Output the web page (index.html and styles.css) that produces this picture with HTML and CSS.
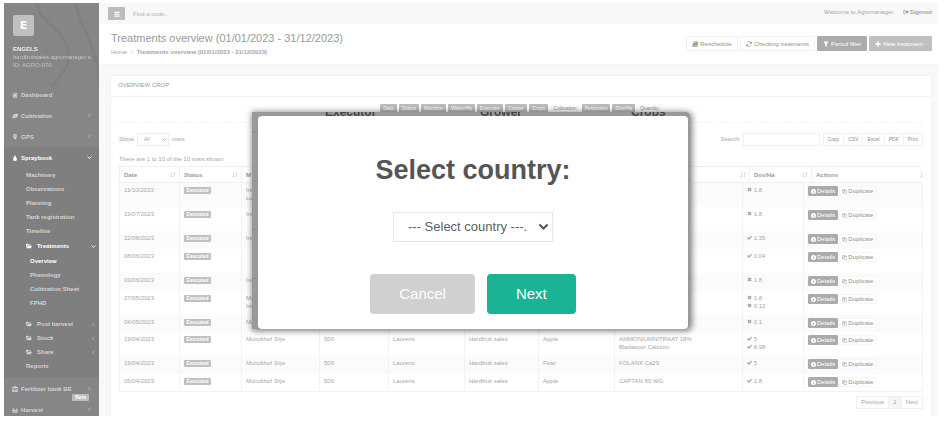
FILE: index.html
```html
<!DOCTYPE html>
<html lang="en">
<head>
    <meta charset="UTF-8">
    <meta name="viewport" content="width=device-width, initial-scale=1.0">
    <title>Treatments overview</title>
    <link rel="stylesheet" href="styles.css">
</head>
<body>

    <!-- Icons -->
    <svg class="sprite" aria-hidden="true">
        <symbol id="home" viewBox="0 0 16 16"><path d="M8 1 0 8l1 1 7-6 7 6 1-1-3-2.600V2h-2v1.600zM8 4.500 3 9v6h4v-4h2v4h4V9z"/></symbol>
        <symbol id="leaf" viewBox="0 0 16 16"><path d="M15 1c-2 2-5 1-8 2-4 1-6 4-5 8l-2 3 1 1 3-2c6 2 12-2 12-9 0-1 0-2-1-3zM4 11c2-3 4-4 8-5-3 2-5 3-7 6z"/></symbol>
        <symbol id="pin" viewBox="0 0 16 16"><path d="M8 0a5 5 0 0 0-5 5c0 3 3 6 5 11 2-5 5-8 5-11a5 5 0 0 0-5-5zm0 3a2 2 0 1 1 0 4 2 2 0 0 1 0-4z"/></symbol>
        <symbol id="drop" viewBox="0 0 16 16"><path d="M8 0C7 4 3 7 3 11a5 5 0 0 0 10 0c0-4-4-7-5-11z"/></symbol>
        <symbol id="folder" viewBox="0 0 16 16"><path d="M0 2h5l1 2h7v2H4l-4 6zM5 7h11l-3 7H1z"/></symbol>
        <symbol id="bank" viewBox="0 0 16 16"><path d="m8 0 8 4v1H0V4zM1 6h3v6h2V6h1v6h2V6h1v6h2V6h3v6h1v1H0v-1h1zM0 14h16v2H0z"/></symbol>
        <symbol id="basket" viewBox="0 0 16 16"><path d="m5 1-3 6H0v2h1l1 6h12l1-6h1V7h-2l-3-6-1 1 2 5H4l2-5zM4 10h1v4H4zm3 0h2v4H7zm4 0h1v4h-1z"/></symbol>
        <symbol id="left" viewBox="0 0 16 16"><path d="M10 3 5 8l5 5" fill="none" stroke="currentColor" stroke-width="2"/></symbol>
        <symbol id="down" viewBox="0 0 16 16"><path d="m2 5 6 6 6-6" fill="none" stroke="currentColor" stroke-width="3"/></symbol>
        <symbol id="sort" viewBox="0 0 16 16"><path d="M4 1v13M1 11l3 3 3-3M12 15V2M9 5l3-3 3 3" fill="none" stroke="currentColor" stroke-width="2"/></symbol>
        <symbol id="check" viewBox="0 0 16 16"><path d="m1 8 5 5 9-9" fill="none" stroke="currentColor" stroke-width="4"/></symbol>
        <symbol id="times" viewBox="0 0 16 16"><path d="m3 3 10 10M13 3 3 13" fill="none" stroke="currentColor" stroke-width="5"/></symbol>
        <symbol id="info" viewBox="0 0 16 16"><path fill-rule="evenodd" d="M8 0a8 8 0 1 1 0 16A8 8 0 0 1 8 0zM7 3v2h2V3zM6 6v2h1v3H6v2h4v-2H9V6z"/></symbol>
        <symbol id="copy" viewBox="0 0 16 16"><path d="M6 11H1V4l3-3h5v3M4 1v3H1M6 15V7l3-3h6v11zM9 4v3H6" fill="none" stroke="currentColor" stroke-width="1.400"/></symbol>
        <symbol id="book" viewBox="0 0 16 16"><path d="M5 1h11l-3 11H4q-2 0-1 1h10l2-7 1 1-2 8H3q-4 0-2-4zM7 4v1h5V4zM6 7v1h5V7z"/></symbol>
        <symbol id="refresh" viewBox="0 0 16 16"><path d="M14 6A6 6 0 0 0 3 4M2 10a6 6 0 0 0 11 2" fill="none" stroke="currentColor" stroke-width="2"/><path d="M15 1v6H9zM1 15V9h6z"/></symbol>
        <symbol id="filter" viewBox="0 0 16 16"><path d="M1 1h14l-5 7v8l-4-3V8z"/></symbol>
        <symbol id="plus" viewBox="0 0 16 16"><path d="M6 1h4v5h5v4h-5v5H6v-5H1V6h5z"/></symbol>
        <symbol id="signout" viewBox="0 0 16 16"><path d="M7 3H2v10h5" fill="none" stroke="currentColor" stroke-width="2"/><path d="M5 6h5V2l6 6-6 6v-4H5z"/></symbol>
        <symbol id="bars" viewBox="0 0 16 16"><path d="M1 2h14v3H1zM1 7h14v3H1zM1 12h14v3H1z"/></symbol>
    </svg>

    <div class="app">

        <!-- Sidebar -->
        <nav class="sidebar">
            <div class="profile">
                <svg class="curves" viewBox="0 0 95 84" aria-hidden="true"><path d="M32 0c4 20 30 28 32 48s-8 22-16 36M72 0c4 26 22 40 23 84" /></svg>
                <div class="logo">E</div>
                <strong>ENGELS</strong>
                <span>hardfruitsales.agromanager.e</span>
                <span>ID: AGRO-970</span>
            </div>
            <ul class="menu">
                <li><a href="#"><svg><use href="#home"/></svg>Dashboard</a></li>
                <li><a href="#"><svg><use href="#leaf"/></svg>Cultivation<svg class="arrow"><use href="#left"/></svg></a></li>
                <li><a href="#"><svg><use href="#pin"/></svg>GPS<svg class="arrow"><use href="#left"/></svg></a></li>
                <li class="active">
                    <a href="#"><svg><use href="#drop"/></svg>Spraybook<svg class="arrow"><use href="#down"/></svg></a>
                    <ul class="submenu">
                        <li><a href="#">Machinery</a></li>
                        <li><a href="#">Observations</a></li>
                        <li><a href="#">Planning</a></li>
                        <li><a href="#">Tank registration</a></li>
                        <li><a href="#">Timeline</a></li>
                        <li class="open">
                            <a class="current" href="#"><svg><use href="#folder"/></svg>Treatments<svg class="arrow"><use href="#down"/></svg></a>
                            <ul class="pages">
                                <li><a class="current" href="#">Overview</a></li>
                                <li><a href="#">Phenology</a></li>
                                <li><a href="#">Cultivation Sheet</a></li>
                                <li><a href="#">FPHD</a></li>
                            </ul>
                        </li>
                        <li><a href="#"><svg><use href="#folder"/></svg>Post harvest<svg class="arrow"><use href="#left"/></svg></a></li>
                        <li><a href="#"><svg><use href="#folder"/></svg>Stock<svg class="arrow"><use href="#left"/></svg></a></li>
                        <li><a href="#"><svg><use href="#folder"/></svg>Share<svg class="arrow"><use href="#left"/></svg></a></li>
                        <li><a href="#">Reports</a></li>
                    </ul>
                </li>
                <li><a href="#"><svg><use href="#bank"/></svg>Fertilizer bank BE<svg class="arrow"><use href="#left"/></svg><span class="beta">Beta</span></a></li>
                <li><a href="#"><svg><use href="#basket"/></svg>Harvest<svg class="arrow"><use href="#left"/></svg></a></li>
            </ul>
        </nav>

        <main class="page">
            <div class="topbar">
                <button class="toggle" aria-label="Toggle menu"><svg><use href="#bars"/></svg></button>
                <input class="find" type="text" placeholder="Find a code..." aria-label="Find a code">
                <span class="welcome">Welcome to Agromanager.</span>
                <a class="signout" href="#"><svg><use href="#signout"/></svg>Signout</a>
            </div>

            <header class="heading">
                <div>
                    <h1>Treatments overview (01/01/2023 - 31/12/2023)</h1>
                    <div class="breadcrumb"><a href="#">Home</a><span>/</span><strong>Treatments overview (01/01/2023 - 31/12/2023)</strong></div>
                </div>
                <div class="heading-actions">
                    <button class="btn"><svg><use href="#book"/></svg>Reschedule</button>
                    <button class="btn"><svg><use href="#refresh"/></svg>Checking treatments</button>
                    <button class="btn dark"><svg><use href="#filter"/></svg>Period filter</button>
                    <button class="btn grey"><svg><use href="#plus"/></svg>New treatment -</button>
                </div>
            </header>

            <section class="card">
                <h2>OVERVIEW CROP</h2>
                <div class="card-body">
                    <div class="tags">
                        <button>Date</button>
                        <button>Status</button>
                        <button>Machine</button>
                        <button>Water/Ha</button>
                        <button>Executor</button>
                        <button>Grower</button>
                        <button>Crops</button>
                        <button class="off">Cultivation</button>
                        <button>Pesticides</button>
                        <button>Dos/Ha</button>
                        <button class="off">Quantity</button>
                    </div>

                    <div class="tools">
                        <label for="rows">Show</label>
                        <span class="rows-select">
                            <select id="rows"><option>All</option></select>
                            <svg><use href="#down"/></svg>
                        </span>
                        <span>rows</span>
                        <label class="search-label" for="search">Search</label>
                        <input id="search" type="text">
                        <div class="exports">
                            <button>Copy</button><button>CSV</button><button>Excel</button><button>PDF</button><button>Print</button>
                        </div>
                    </div>

                    <p class="count">There are 1 to 10 of the 10 rows shown</p>

                    <table class="head">
                        <colgroup><col class="w60"><col class="w62"><col class="w78"><col class="w70"><col class="w77"><col class="w75"><col class="w78"><col class="w130"><col class="w62"><col></colgroup>
                        <thead>
                            <tr>
                                <th>Date<svg><use href="#sort"/></svg></th>
                                <th>Status<svg><use href="#sort"/></svg></th>
                                <th>M</th>
                                <th></th>
                                <th></th>
                                <th></th>
                                <th></th>
                                <th><svg><use href="#sort"/></svg></th>
                                <th>Dos/Ha<svg><use href="#sort"/></svg></th>
                                <th>Actions<svg class="cut"><use href="#sort"/></svg></th>
                            </tr>
                        </thead>
                    </table>
                    <table class="rows">
                        <colgroup><col class="w60"><col class="w62"><col class="w78"><col class="w69"><col class="w76"><col class="w74"><col class="w76"><col class="w128"><col class="w61"><col></colgroup>
                        <tbody>
                            <tr class="tall">
                                <td>11/10/2023</td><td><span class="status">Executed</span></td><td>Inc<br>Lo</td><td></td><td></td><td></td><td></td><td></td>
                                <td><svg><use href="#times"/></svg> 1.8</td>
                                <td><button class="details"><svg><use href="#info"/></svg>Details</button><button class="duplicate"><svg><use href="#copy"/></svg>Duplicate</button></td>
                            </tr>
                            <tr class="tall">
                                <td>19/07/2023</td><td><span class="status">Executed</span></td><td>Inc</td><td></td><td></td><td></td><td></td><td></td>
                                <td><svg><use href="#times"/></svg> 1.8</td>
                                <td><button class="details"><svg><use href="#info"/></svg>Details</button><button class="duplicate"><svg><use href="#copy"/></svg>Duplicate</button></td>
                            </tr>
                            <tr>
                                <td>22/06/2023</td><td><span class="status">Executed</span></td><td>Inc</td><td></td><td></td><td></td><td></td><td></td>
                                <td><svg><use href="#check"/></svg> 1.35</td>
                                <td><button class="details"><svg><use href="#info"/></svg>Details</button><button class="duplicate"><svg><use href="#copy"/></svg>Duplicate</button></td>
                            </tr>
                            <tr class="tall">
                                <td>08/06/2023</td><td><span class="status">Executed</span></td><td></td><td></td><td></td><td></td><td></td><td></td>
                                <td><svg><use href="#check"/></svg> 0.04</td>
                                <td><button class="details"><svg><use href="#info"/></svg>Details</button><button class="duplicate"><svg><use href="#copy"/></svg>Duplicate</button></td>
                            </tr>
                            <tr>
                                <td>03/06/2023</td><td><span class="status">Executed</span></td><td>Inc</td><td></td><td></td><td></td><td></td><td></td>
                                <td><svg><use href="#times"/></svg> 1.8</td>
                                <td><button class="details"><svg><use href="#info"/></svg>Details</button><button class="duplicate"><svg><use href="#copy"/></svg>Duplicate</button></td>
                            </tr>
                            <tr class="tall">
                                <td>27/05/2023</td><td><span class="status">Executed</span></td><td>Mu<br>Inc</td><td></td><td></td><td></td><td></td><td></td>
                                <td><svg><use href="#times"/></svg> 1.8<br><svg><use href="#times"/></svg> 0.12</td>
                                <td><button class="details"><svg><use href="#info"/></svg>Details</button><button class="duplicate"><svg><use href="#copy"/></svg>Duplicate</button></td>
                            </tr>
                            <tr>
                                <td>04/05/2023</td><td><span class="status">Executed</span></td><td>Mu</td><td></td><td></td><td></td><td></td><td></td>
                                <td><svg><use href="#times"/></svg> 0.1</td>
                                <td><button class="details"><svg><use href="#info"/></svg>Details</button><button class="duplicate"><svg><use href="#copy"/></svg>Duplicate</button></td>
                            </tr>
                            <tr class="tall">
                                <td>19/04/2023</td><td><span class="status">Executed</span></td><td>Munckhof 3rije</td><td>500</td><td>Laurens</td><td>Hardfruit sales</td><td>Apple</td><td>AMMONIUMNITRAAT 18%<br>Bladaspor Calcium</td>
                                <td><svg><use href="#check"/></svg> 5<br><svg><use href="#check"/></svg> 8.98</td>
                                <td><button class="details"><svg><use href="#info"/></svg>Details</button><button class="duplicate"><svg><use href="#copy"/></svg>Duplicate</button></td>
                            </tr>
                            <tr>
                                <td>19/04/2023</td><td><span class="status">Executed</span></td><td>Munckhof 3rije</td><td>500</td><td>Laurens</td><td>Hardfruit sales</td><td>Pear</td><td>FOLANX Ca29</td>
                                <td><svg><use href="#check"/></svg> 5</td>
                                <td><button class="details"><svg><use href="#info"/></svg>Details</button><button class="duplicate"><svg><use href="#copy"/></svg>Duplicate</button></td>
                            </tr>
                            <tr>
                                <td>05/04/2023</td><td><span class="status">Executed</span></td><td>Munckhof 3rije</td><td>500</td><td>Laurens</td><td>Hardfruit sales</td><td>Apple</td><td>CAPTAN 80 WG</td>
                                <td><svg><use href="#check"/></svg> 1.8</td>
                                <td><button class="details"><svg><use href="#info"/></svg>Details</button><button class="duplicate"><svg><use href="#copy"/></svg>Duplicate</button></td>
                            </tr>
                        </tbody>
                    </table>

                    <div class="pager">
                        <button>Previous</button><button class="on">1</button><button>Next</button>
                    </div>
                </div>
            </section>
        </main>
    </div>

    <!-- Country modal -->
    <div class="overlay">
        <div class="frame">
            <div class="behind" aria-hidden="true"><span>Executor</span><span>Grower</span><span>Crops</span></div>
            <form class="modal" role="dialog" aria-labelledby="modalTitle">
                <h2 id="modalTitle">Select country:</h2>
                <div class="country">
                    <select aria-label="Country"><option>--- Select country ---.</option></select>
                    <svg><use href="#down"/></svg>
                </div>
                <div class="modal-actions">
                    <button class="cancel" type="button">Cancel</button>
                    <button class="next" type="button">Next</button>
                </div>
            </form>
        </div>
    </div>

</body>
</html>
```
FILE: styles.css
```css
* {
    box-sizing: border-box;
}

body {
    margin: 0;
    padding: 3px 7px 5px 4px;
    height: 100vh;
    overflow: hidden;
    background: #fff;
    color: #a6a6a6;
    font: 6px/8px "Liberation Sans", Arial, sans-serif;
}

button, input, select {
    font: inherit;
    color: inherit;
    margin: 0;
}

a {
    color: inherit;
    text-decoration: none;
}

ul {
    list-style: none;
    margin: 0;
    padding: 0;
}

svg {
    width: 6px;
    height: 6px;
    fill: currentColor;
    flex: none;
}

.sprite {
    display: none;
}

.app {
    display: flex;
    height: 100%;
    overflow: hidden;
}

/* Sidebar */
.sidebar {
    flex: 0 0 95px;
    overflow: hidden;
    background: #868686;
    color: #d4d4d4;
    font-weight: bold;
}

.profile {
    position: relative;
    display: flex;
    flex-direction: column;
    height: 81px;
    padding: 12px 0 0 9px;
    color: #c4c4c4;
    font-weight: normal;
    white-space: nowrap;
}

.curves {
    position: absolute;
    top: 0;
    left: 0;
    width: 95px;
    height: 84px;
    fill: none;
    stroke: #808080;
    stroke-width: 3;
}

.profile > * + * {
    z-index: 1;
}

.logo {
    width: 21px;
    height: 21px;
    margin-bottom: 9px;
    border-radius: 2px;
    background: #c0c0c0;
    color: #fff;
    font: bold 11px/21px "DejaVu Sans", sans-serif;
    text-align: center;
}

.profile strong {
    color: #f0f0f0;
}

.menu a {
    position: relative;
    display: flex;
    align-items: center;
    height: 21px;
    padding: 0 7px 0 8px;
    gap: 3px;
}

.menu .arrow {
    margin-left: auto;
    width: 5px;
    height: 5px;
}

.menu .active {
    background: #7f7f7f;
    padding-bottom: 5px;
}

.menu .active > a,
.menu .current {
    color: #fff;
}

.menu .submenu a {
    height: 14px;
    padding: 0 3px 0 22px;
    gap: 5px;
}

.menu .submenu .open {
    padding: 1px 0 7px;
}

.menu .pages {
    padding-top: 1px;
}

.menu .pages a {
    padding-left: 26px;
}

.beta {
    position: absolute;
    right: 10px;
    bottom: -2px;
    padding: 0 3px;
    border-radius: 1px;
    background: #bdbdbd;
    color: #fff;
    font-size: 5px;
    line-height: 7px;
}

/* Top of the page */
.page {
    flex: 1;
    min-width: 0;
    background: #f8f8f8;
}

.topbar {
    display: flex;
    align-items: center;
    height: 21px;
    padding: 0 6px 0 9px;
}

.toggle {
    display: flex;
    align-items: center;
    justify-content: center;
    width: 17px;
    height: 13px;
    padding: 0;
    border: 0;
    border-radius: 1px;
    background: #bcbcbc;
    color: #fff;
}

.find {
    width: 100px;
    margin-left: 6px;
    border: 0;
    padding: 0 2px;
    background: none;
}

.find::placeholder {
    color: #b4b4b4;
}

.welcome {
    margin: 0 8px 4px auto;
}

.signout {
    display: flex;
    align-items: center;
    gap: 1px;
    margin-bottom: 4px;
    font-weight: bold;
}

.heading {
    display: flex;
    justify-content: space-between;
    height: 41px;
    padding: 7px 6px 0 12px;
    background: #fff;
    border-bottom: 1px solid #f4f4f4;
}

.heading h1 {
    margin: 0 0 3px;
    color: #999;
    font-size: 11px;
    font-weight: normal;
    line-height: 14px;
}

.breadcrumb {
    display: flex;
    gap: 4px;
}

.breadcrumb span {
    color: #ccc;
}

.heading-actions {
    display: flex;
    gap: 2px;
    margin-top: 5px;
}

.btn {
    display: flex;
    align-items: center;
    gap: 2px;
    height: 15px;
    padding: 0 5px;
    border: 1px solid #f0f0f0;
    border-radius: 1px;
    background: #fff;
    color: #929292;
    white-space: nowrap;
}

.btn.dark {
    border-color: #ababab;
    background: #ababab;
    color: #fff;
}

.btn.grey {
    border-color: #bfbfbf;
    background: #bfbfbf;
    color: #fff;
}

/* Card */
.card {
    margin: 10px 6px 0 11px;
    border: 1px solid #f3f3f3;
    border-bottom: 0;
    background: #fff;
    height: 100%;
}

.card h2 {
    margin: 0;
    padding: 5px 7px 0;
    height: 21px;
    border-bottom: 1px solid #f2f2f2;
    color: #999;
    font-size: 6px;
    font-weight: normal;
}

.card-body {
    padding: 7px 8px 0;
}

.tags {
    display: flex;
    justify-content: center;
    gap: 2px;
    height: 19px;
    border-bottom: 1px dashed #f2f2f2;
}

.tags button {
    height: 9px;
    padding: 0 3px;
    border: 0;
    border-radius: 1px;
    background: #bcbcbc;
    color: #fff;
    font-size: 5px;
    line-height: 9px;
}

.tags .off {
    background: #fcfcfc;
    color: #8c8c8c;
}

.tools {
    display: flex;
    align-items: center;
    gap: 3px;
    height: 14px;
    margin-top: 9px;
}

.rows-select {
    position: relative;
}

.rows-select select {
    display: block;
    width: 32px;
    height: 13px;
    padding: 0 6px;
    border: 1px solid #eee;
    background: #fff;
    appearance: none;
    font-size: 5px;
}

.rows-select svg {
    position: absolute;
    right: 2px;
    top: 4px;
    width: 5px;
    height: 5px;
}

.search-label {
    margin-left: auto;
}

.tools input {
    width: 77px;
    height: 13px;
    border: 1px solid #f0f0f0;
    background: #fff;
}

.exports,
.pager {
    display: flex;
    height: 13px;
    border: 1px solid #f0f0f0;
}

.exports button,
.pager button {
    padding: 0 4px;
    border: 0;
    border-right: 1px solid #f2f2f2;
    background: #fff;
}

.exports button {
    color: #8c8c8c;
    font-size: 5px;
}

.exports button:last-child,
.pager button:last-child {
    border-right: 0;
}

.count {
    margin: 9px 0 3px;
}

/* Tables */
table {
    width: 100%;
    table-layout: fixed;
    border-collapse: collapse;
}

.w60 { width: 60px; }
.w61 { width: 61px; }
.w62 { width: 62px; }
.w69 { width: 69px; }
.w70 { width: 70px; }
.w74 { width: 74px; }
.w75 { width: 75px; }
.w76 { width: 76px; }
.w77 { width: 77px; }
.w78 { width: 78px; }
.w128 { width: 128px; }
.w130 { width: 130px; }

th {
    position: relative;
    height: 16px;
    padding: 0 4px;
    border: 1px solid #f0f0f0;
    color: #999;
    text-align: left;
}

.head th:last-child {
    border-right: 0;
    overflow: hidden;
}

th svg {
    position: absolute;
    right: 3px;
    top: 5px;
    color: #d4d4d4;
}

th .cut {
    right: -3px;
}

td {
    height: 18px;
    padding: 3px 4px 0;
    border-right: 1px solid #f2f2f2;
    border-left: 1px solid #f2f2f2;
    vertical-align: top;
    white-space: nowrap;
}

.tall td {
    height: 24px;
}

tr:nth-child(7) td,
tr:nth-child(10) td {
    height: 17px;
}

.rows {
    border-bottom: 1px solid #f2f2f2;
}

.rows tr:nth-child(odd) {
    background: #fbfbfb;
}

td svg {
    width: 5px;
    height: 5px;
}

.status {
    display: inline-block;
    width: 27px;
    border-radius: 1px;
    background: #c0c0c0;
    color: #fff;
    font-size: 5px;
    font-weight: bold;
    line-height: 7px;
    text-align: center;
}

.details,
.duplicate {
    height: 10px;
    padding: 0 2px;
    border: 1px solid #f6f6f6;
    border-radius: 1px;
    background: #fff;
    color: #8c8c8c;
    line-height: 8px;
    vertical-align: top;
}

.details {
    margin-right: 1px;
    border-color: #ababab;
    background: #ababab;
    color: #fff;
}

.details svg,
.duplicate svg {
    margin-right: 1px;
    vertical-align: -1px;
}

.pager {
    width: fit-content;
    margin: 4px 0 0 auto;
}

.pager .on {
    background: #f5f5f5;
}

/* Country modal */
.overlay {
    position: fixed;
    inset: 0;
    display: flex;
    justify-content: center;
    align-items: flex-start;
    padding: 112px 3px 0 0;
}

.frame {
    position: relative;
    width: 438px;
    padding: 4px 2px 0 6px;
    overflow: hidden;
    border-radius: 0 4px 4px 0;
    background: repeating-linear-gradient(#999 0 48px, #8a8a8a 48px 49px) 0 -29px;
    box-shadow: 1px 1px 6px 1px rgba(0, 0, 0, 0.5);
}

.behind {
    position: absolute;
    top: -7px;
    left: 73px;
    display: grid;
    grid-template-columns: 155px 151px auto;
    color: #444;
    font-size: 12px;
    font-weight: bold;
    line-height: 14px;
}

.modal {
    position: relative;
    padding: 38px 20px 15px;
    border-radius: 4px;
    background: #fff;
    text-align: center;
}

.modal h2 {
    margin: 0 0 26px;
    color: #555;
    font-size: 27px;
    line-height: 32px;
}

.country {
    position: relative;
    width: 160px;
    margin: 0 auto 32px;
}

.country select {
    display: block;
    width: 100%;
    height: 30px;
    padding: 0 14px;
    border: 1px solid #e5e6e7;
    border-radius: 0;
    background: #fff;
    color: #606060;
    appearance: none;
    font-size: 13px;
    line-height: 20px;
}

.country svg {
    position: absolute;
    right: 4px;
    top: 9px;
    width: 11px;
    height: 11px;
    color: #555;
}

.modal-actions {
    display: flex;
    justify-content: center;
    gap: 12px;
}

.modal-actions button {
    height: 40px;
    padding: 0 29px;
    border: 0;
    border-radius: 4px;
    background: #d0d0d0;
    color: #fff;
    font-size: 15px;
}

.modal-actions .next {
    background: #1ab394;
}
```
